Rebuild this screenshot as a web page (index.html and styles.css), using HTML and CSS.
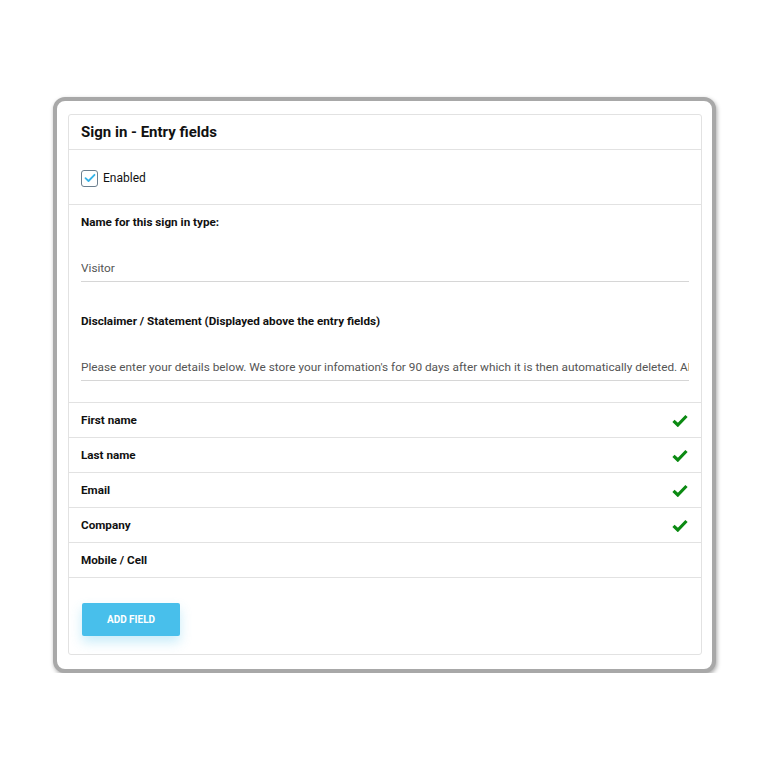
FILE: index.html
```html
<!DOCTYPE html>
<html lang="en">
<head>
    <meta charset="UTF-8">
    <meta name="viewport" content="width=device-width, initial-scale=1.0">
    <title>Sign in - Entry fields</title>
    <link rel="stylesheet" href="styles.css">
</head>
<body>
    <div class="frame">
        <div class="card">
            <div class="card-header">Sign in - Entry fields</div>

            <div class="section enabled">
                <label class="check">
                    <span class="box">
                        <svg width="12" height="10" viewBox="0 0 12 10"><path d="M1.5 5.2 L4.5 8 L10.5 1.8" fill="none" stroke="#35b3e8" stroke-width="1.8" stroke-linecap="round" stroke-linejoin="round"/></svg>
                    </span>
                    Enabled
                </label>
            </div>

            <div class="section fields">
                <div class="field-label">Name for this sign in type:</div>
                <div class="input">Visitor</div>
                <div class="field-label">Disclaimer / Statement (Displayed above the entry fields)</div>
                <div class="input">Please enter your details below. We store your infomation's for 90 days after which it is then automatically deleted. Also by signing in you agree to our terms and conditions.</div>
            </div>

            <div class="row">First name <span class="tick"></span></div>
            <div class="row">Last name <span class="tick"></span></div>
            <div class="row">Email <span class="tick"></span></div>
            <div class="row">Company <span class="tick"></span></div>
            <div class="row">Mobile / Cell</div>

            <div class="actions">
                <button>ADD FIELD</button>
            </div>
        </div>
    </div>

    <script>
        document.querySelectorAll('.tick').forEach(function(t) {
            t.innerHTML = '<svg width="16" height="13" viewBox="0 0 16 13"><path d="M1.5 6.8 L5.8 11 L14.5 2" fill="none" stroke="#0b8a12" stroke-width="3.2"/></svg>';
        });
    </script>
</body>
</html>
```

FILE: styles.css
```css
body {
    margin: 0;
    padding: 0;
    background: #fff;
    font-family: Roboto, 'Liberation Sans', sans-serif;
    color: #111;
}

.frame {
    box-sizing: border-box;
    width: 663px;
    height: 576px;
    margin: 97px 0 0 53px;
    padding: 13px 10px 14px 11px;
    border: 4px solid #a8a8a8;
    border-radius: 12px;
    background: #fff;
    box-shadow: 1px 2px 4px rgba(0, 0, 0, 0.35);
}

.card {
    box-sizing: border-box;
    height: 541px;
    border: 1px solid #e2e2e2;
    border-radius: 3px;
    display: flex;
    flex-direction: column;
}

.card > * {
    flex-shrink: 0;
}

.card-header {
    height: 34px;
    padding: 0 12px;
    font-size: 15px;
    font-weight: 700;
    line-height: 34px;
    border-bottom: 1px solid #e2e2e2;
}

.section {
    border-bottom: 1px solid #e2e2e2;
    padding: 0 12px;
}

.enabled {
    height: 55px;
    display: flex;
    align-items: center;
    padding-top: 2px;
    box-sizing: border-box;
}

.check {
    display: flex;
    align-items: center;
    gap: 5px;
    font-size: 12px;
}

.box {
    box-sizing: border-box;
    width: 17px;
    height: 17px;
    border: 1.5px solid #6c7f8f;
    border-radius: 3px;
    display: flex;
    align-items: center;
    justify-content: center;
}

.fields {
    padding-top: 10px;
    padding-bottom: 21px;
}

.field-label {
    font-size: 11.7px;
    font-weight: 700;
    line-height: 14px;
}

.input {
    margin: 32px 0 32px;
    padding-bottom: 5px;
    border-bottom: 1px solid #d6d6d6;
    font-size: 11.8px;
    line-height: 15px;
    color: #555;
    white-space: nowrap;
    overflow: hidden;
}

.input:last-child {
    margin-bottom: 0;
}

.row {
    height: 34px;
    padding: 0 12px;
    border-bottom: 1px solid #e2e2e2;
    display: flex;
    align-items: center;
    justify-content: space-between;
    font-size: 11.7px;
    font-weight: 700;
}

.tick {
    display: flex;
    margin-right: 1px;
}

.actions {
    flex: 1;
    padding: 25px 13px 0;
}

button {
    width: 98px;
    height: 33px;
    border: none;
    border-radius: 2px;
    background: #48bfeb;
    color: #fff;
    font-family: Roboto, 'Liberation Sans', sans-serif;
    font-size: 10px;
    font-weight: 700;
    box-shadow: 0 6px 12px rgba(72, 191, 235, 0.3);
}
```
